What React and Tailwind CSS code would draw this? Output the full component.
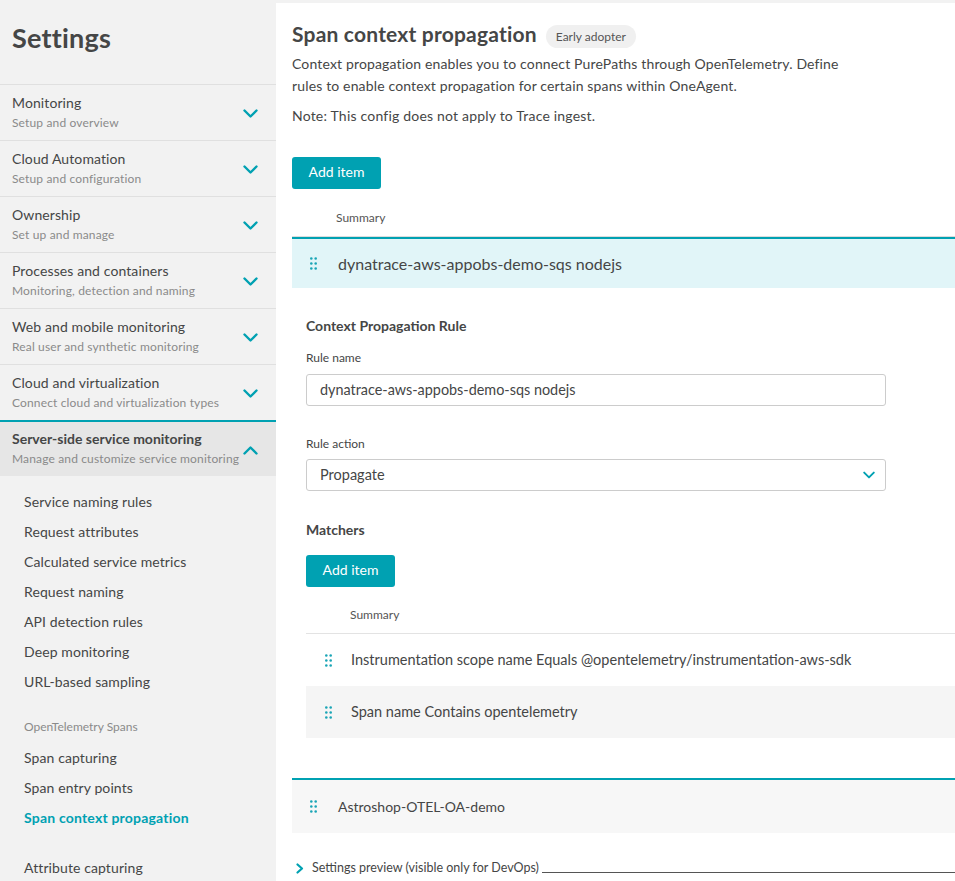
import React from "react"

const groups = [
  { title: "Monitoring", sub: "Setup and overview" },
  { title: "Cloud Automation", sub: "Setup and configuration" },
  { title: "Ownership", sub: "Set up and manage" },
  { title: "Processes and containers", sub: "Monitoring, detection and naming" },
  { title: "Web and mobile monitoring", sub: "Real user and synthetic monitoring" },
  { title: "Cloud and virtualization", sub: "Connect cloud and virtualization types" },
]

const serviceItems = [
  "Service naming rules",
  "Request attributes",
  "Calculated service metrics",
  "Request naming",
  "API detection rules",
  "Deep monitoring",
  "URL-based sampling",
]

function Chevron({ up = false, className = "" }) {
  return (
    <svg className={className} width="15" height="9" viewBox="0 0 15 9" fill="none">
      <path
        d={up ? "M1.5 7.5L7.5 1.5L13.5 7.5" : "M1.5 1.5L7.5 7.5L13.5 1.5"}
        stroke="#00a1b2"
        strokeWidth="2.4"
        strokeLinecap="round"
        strokeLinejoin="round"
      />
    </svg>
  )
}

function DragHandle() {
  return (
    <svg width="7" height="13" viewBox="0 0 7 13" fill="#1aa5b6">
      <circle cx="1.3" cy="1.5" r="1.3" />
      <circle cx="5.7" cy="1.5" r="1.3" />
      <circle cx="1.3" cy="6.5" r="1.3" />
      <circle cx="5.7" cy="6.5" r="1.3" />
      <circle cx="1.3" cy="11.5" r="1.3" />
      <circle cx="5.7" cy="11.5" r="1.3" />
    </svg>
  )
}

function Sidebar() {
  return (
    <aside className="w-[276px] shrink-0 bg-[#f2f2f2] text-[#454646]">
      <div className="h-[84px] pt-[20px] pl-3">
        <h1 className="text-[27px] leading-[36px] font-bold tracking-[0.2px]">Settings</h1>
      </div>
      {groups.map((g) => (
        <div key={g.title} className="h-[56px] border-t border-[#e0e0e0] flex items-start justify-between pl-3 pr-[18px]">
          <div className="pt-[8px]">
            <div className="text-[14px] leading-5 tracking-[0.1px]">{g.title}</div>
            <div className="text-[12px] leading-4 mt-[2px] text-[#8a8a8a] tracking-[0.15px]">{g.sub}</div>
          </div>
          <Chevron className="mt-[24px]" />
        </div>
      ))}
      <div className="h-[56px] border-t-2 border-[#00a1b2] bg-[#e6e6e6] flex items-start justify-between pl-3 pr-[18px]">
        <div className="pt-[7px]">
          <div className="text-[14px] leading-5 font-bold">Server-side service monitoring</div>
          <div className="text-[12px] leading-4 mt-[2px] text-[#8a8a8a] tracking-[0.15px]">Manage and customize service monitoring</div>
        </div>
        <Chevron up className="mt-[24px]" />
      </div>
      <div className="pt-[11px] pl-6">
        {serviceItems.map((s) => (
          <div key={s} className="h-[30px] leading-[30px] text-[14px] tracking-[0.1px]">{s}</div>
        ))}
        <div className="mt-[15px] h-[30px] leading-[30px] text-[12px] text-[#8a8a8a]">OpenTelemetry Spans</div>
        <div className="mt-[1px] h-[30px] leading-[30px] text-[14px] tracking-[0.1px]">Span capturing</div>
        <div className="h-[30px] leading-[30px] text-[14px] tracking-[0.1px]">Span entry points</div>
        <div className="h-[30px] leading-[30px] text-[14px] font-bold text-[#00a1b2] tracking-[0.2px]">Span context propagation</div>
        <div className="mt-[20px] h-[30px] leading-[30px] text-[14px] tracking-[0.1px]">Attribute capturing</div>
      </div>
    </aside>
  )
}

function AddButton() {
  return (
    <button className="h-[32px] w-[89px] rounded-[3px] bg-[#00a1b2] text-white text-[14px] leading-[28px] pb-[2px] text-center">
      Add item
    </button>
  )
}

function Main() {
  return (
    <main className="flex-1 min-w-0 bg-white border-t-[3px] border-[#f2f2f2] text-[#454646]">
      <div className="pl-4 pt-[17px]">
        <div className="flex items-center h-[28px]">
          <h2 className="text-[21px] leading-[28px] font-bold tracking-[0.2px]">Span context propagation</h2>
          <span className="ml-[9px] mt-[4px] h-[23px] px-[10px] rounded-full bg-[#f0f0f0] text-[12px] leading-[23px] text-[#555]">
            Early adopter
          </span>
        </div>
        <p className="mt-[5px] text-[14px] leading-[22px] tracking-[0.15px]">
          Context propagation enables you to connect PurePaths through OpenTelemetry. Define
          <br />
          rules to enable context propagation for certain spans within OneAgent.
        </p>
        <p className="mt-[8px] text-[14px] leading-[22px] tracking-[0.2px]">Note: This config does not apply to Trace ingest.</p>
        <div className="mt-[30px]">
          <AddButton />
        </div>

        <div className="mt-[11px] h-[37px] leading-[36px] pl-[44px] text-[12px] text-[#555] border-b border-[#dcdcdc]">Summary</div>

        <div className="border-t-2 border-[#00a1b2] bg-[#e1f5f8] h-[51px] flex items-center pl-[18px]">
          <DragHandle />
          <span className="ml-[21px] text-[16px]">dynatrace-aws-appobs-demo-sqs nodejs</span>
        </div>

        <div className="pl-[14px] pt-[28px] pb-[40px]">
          <div className="text-[14px] leading-5 font-bold">Context Propagation Rule</div>
          <div className="mt-[14px] text-[12px] leading-4">Rule name</div>
          <div className="mt-[8px] w-[580px] h-[32px] border border-[#cccccc] rounded-[3px] px-[13px] pb-[1px] flex items-center text-[14.4px]">
            dynatrace-aws-appobs-demo-sqs nodejs
          </div>
          <div className="mt-[30px] text-[12px] leading-4">Rule action</div>
          <div className="mt-[7px] w-[580px] h-[32px] border border-[#cccccc] rounded-[3px] pl-[13px] pr-[10px] pb-[1px] flex items-center justify-between text-[14.5px]">
            <span>Propagate</span>
            <Chevron className="w-[12px] h-[8px]" />
          </div>
          <div className="mt-[29px] text-[14px] leading-5 font-bold">Matchers</div>
          <div className="mt-[15px]">
            <AddButton />
          </div>
          <div className="mt-[10px] h-[37px] leading-[36px] pl-[44px] text-[12px] text-[#555] border-b border-[#e3e3e3]">Summary</div>
          <div className="h-[52px] flex items-center pl-[19px]">
            <DragHandle />
            <span className="ml-[19px] text-[14.5px]">Instrumentation scope name Equals @opentelemetry/instrumentation-aws-sdk</span>
          </div>
          <div className="h-[52px] flex items-center pl-[19px] bg-[#f5f5f5]">
            <DragHandle />
            <span className="ml-[19px] text-[14.5px]">Span name Contains opentelemetry</span>
          </div>
        </div>

        <div className="border-t-2 border-[#00a1b2] bg-[#f7f7f7] h-[55px] flex items-center pl-[18px]">
          <DragHandle />
          <span className="ml-[21px] text-[14px]">Astroshop-OTEL-OA-demo</span>
        </div>

        <div className="mt-[27px] flex items-center pl-[4px]">
          <svg width="8" height="11" viewBox="0 0 8 11" fill="none">
            <path d="M1.5 1.5L6 5.5L1.5 9.5" stroke="#00a1b2" strokeWidth="2.2" strokeLinecap="round" strokeLinejoin="round" />
          </svg>
          <span className="ml-[8px] text-[12.5px] leading-4">Settings preview (visible only for DevOps)</span>
          <div className="flex-1 ml-[3px] mt-[8px] border-t border-[#555]"></div>
        </div>
      </div>
    </main>
  )
}

export default function App() {
  return (
    <div className="flex h-[881px] w-[955px] overflow-hidden font-['Lato',sans-serif]">
      <Sidebar />
      <Main />
    </div>
  )
}
